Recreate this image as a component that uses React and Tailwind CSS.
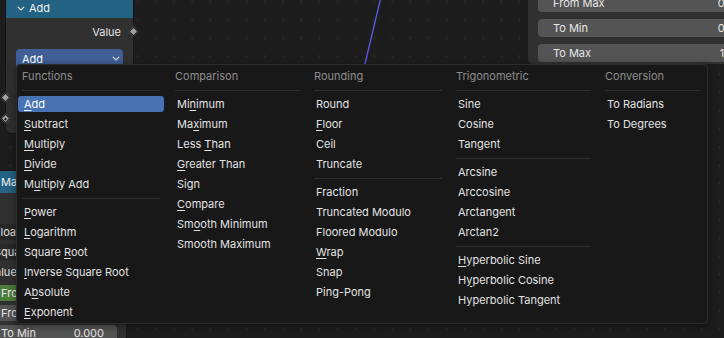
import React from "react";

const columns = [
  {
    title: "Functions",
    w: "w-[146px]",
    groups: [
      ["&Add", "&Subtract", "&Multiply", "&Divide", "M&ultiply Add"],
      ["&Power", "&Logarithm", "Square &Root", "&Inverse Square Root", "A&bsolute", "&Exponent"],
    ],
  },
  {
    title: "Comparison",
    w: "w-[133px] ml-[1px]",
    groups: [
      ["Mi&nimum", "Ma&ximum", "Less &Than", "&Greater Than", "Sign", "&Compare", "Sm&ooth Minimum", "Smooth Maximum"],
    ],
  },
  {
    title: "Rounding",
    w: "w-[136px]",
    groups: [
      ["Round", "&Floor", "Ceil", "Truncate"],
      ["Fraction", "Truncated Modulo", "Floored Modulo", "&Wrap", "Snap", "Ping-Pong"],
    ],
  },
  {
    title: "Trigonometric",
    w: "w-[143px]",
    groups: [
      ["Sine", "Cosine", "Tangent"],
      ["Arcsine", "Arccosine", "Arctangent", "Arctan2"],
      ["&Hyperbolic Sine", "H&yperbolic Cosine", "Hyperbolic Tangent"],
    ],
  },
  {
    title: "Conversion",
    w: "w-[103px]",
    groups: [["To Radians", "To Degrees"]],
  },
];

function Label({ text }) {
  const i = text.indexOf("&");
  if (i < 0) return <span>{text}</span>;
  return (
    <span>
      {text.slice(0, i)}
      <span className="underline decoration-1 underline-offset-[2px]">{text[i + 1]}</span>
      {text.slice(i + 2)}
    </span>
  );
}

function Sep() {
  return (
    <div className="h-[8px] flex items-center px-[4px]">
      <div className="h-px w-full bg-[#2e2e2e]" />
    </div>
  );
}

function Column({ col }) {
  return (
    <div className={`${col.w} flex flex-col`}>
      <div className="h-[20px] flex items-center px-[4px] text-[#8d8d8d]">{col.title}</div>
      {col.groups.map((g, gi) => (
        <React.Fragment key={gi}>
          <Sep />
          {g.map((it) => {
            const active = it === "&Add";
            return (
              <div key={it} className="h-[20px] py-[2px]">
                <div
                  className={`h-[16px] rounded-[3px] px-[6px] flex items-center ${
                    active ? "bg-[#4772b3] text-white" : "text-[#e2e2e2]"
                  }`}
                >
                  <Label text={it} />
                </div>
              </div>
            );
          })}
        </React.Fragment>
      ))}
    </div>
  );
}

function Socket({ hollow }) {
  return (
    <div className="w-[7px] h-[7px] rotate-45 bg-[#a3a3a3] border border-[#1c1c1c] flex items-center justify-center">
      {hollow && <div className="w-[2px] h-[2px] bg-[#1c1c1c]" />}
    </div>
  );
}

function Chevron({ className }) {
  return (
    <svg width="8" height="5" viewBox="0 0 8 5" className={className}>
      <path d="M0.8 0.8 L4 4 L7.2 0.8" fill="none" stroke="currentColor" strokeWidth="1.1" />
    </svg>
  );
}

export default function App() {
  return (
    <div className="relative w-[724px] h-[338px] overflow-hidden bg-[#1d1d1d] bg-[radial-gradient(circle,#2a2a2a_0.9px,transparent_1.3px)] bg-[length:18.2px_18.2px] bg-[position:1.2px_-7.4px] font-['Inter','Noto_Sans',sans-serif] text-[11px] leading-none">
      {/* node link */}
      <svg className="absolute inset-0" width="724" height="338">
        <line x1="380.5" y1="-1" x2="363.5" y2="70" stroke="#5c5ce6" strokeWidth="1.3" />
      </svg>

      {/* Math node: Add */}
      <div className="absolute left-[6px] top-[-3px] w-[127px] h-[136px] rounded-[5px] bg-[#303030] shadow-[0_0_0_1px_#161616]">
        <div className="h-[21px] rounded-t-[5px] bg-[#246283] flex items-end pb-[4px] text-[#f0f0f0]">
          <Chevron className="ml-[11px] mr-[4px] mb-[3px] text-[#e8e8e8]" />
          <span>Add</span>
        </div>
        <div className="h-[20px] mt-[4px] flex items-center justify-end pr-[12px] text-[#e2e2e2]">Value</div>
        <div className="mt-[7px] mx-[10px] h-[20px] rounded-[4px] bg-[#3f5f96] flex items-center justify-between pl-[6px] pr-[3px] text-white">
          <span>Add</span>
          <Chevron className="text-[#dcdcdc] mb-[1px]" />
        </div>
        <div className="absolute right-[-4px] top-[31px]">
          <Socket />
        </div>
        <div className="absolute left-[-4px] top-[97px]">
          <Socket />
        </div>
        <div className="absolute left-[-4px] top-[118px]">
          <Socket hollow />
        </div>
      </div>

      {/* Map Range node (left, mostly hidden) */}
      <div className="absolute left-[-22px] top-[171px] w-[148px] h-[190px] rounded-[5px] bg-[#303030] shadow-[0_0_0_1px_#161616]">
        <div className="h-[22px] rounded-t-[5px] bg-[#246283] flex items-center pl-[23px] text-[#f0f0f0]">Map Range</div>
        <div className="h-[29px] flex items-center justify-end pr-[12px] text-[#e2e2e2]">Result</div>
        <div className="h-[20px] py-[2px] px-[8px]">
          <div className="h-full rounded-[4px] bg-[#282828] flex items-center pl-[8px] text-[#e2e2e2]">Float</div>
        </div>
        <div className="h-[20px] py-[2px] px-[8px]">
          <div className="h-full rounded-[4px] bg-[#282828] flex items-center pl-[8px] text-[#e2e2e2]">Square</div>
        </div>
        <div className="h-[21px] flex items-center pl-[10px] text-[#e2e2e2]">Value</div>
        <div className="h-[20px] py-[2px] px-[8px]">
          <div className="h-full rounded-[4px] bg-[#4d7d3a] flex items-center pl-[15px] text-[#f0f0f0]">From Min</div>
        </div>
        <div className="h-[20px] py-[2px] px-[8px]">
          <div className="h-full rounded-[4px] bg-[#545454] flex items-center pl-[15px] text-[#e6e6e6]">From Max</div>
        </div>
        <div className="h-[20px] py-[2px] pl-[8px] pr-[9px]">
          <div className="h-full rounded-[4px] bg-[#545454] flex items-center justify-between pl-[15px] pr-[13px] text-[#e6e6e6]">
            <span>To Min</span>
            <span>0.000</span>
          </div>
        </div>
      </div>

      {/* Map Range node (top right) */}
      <div className="absolute left-[528px] top-[-20px] w-[240px] h-[84px] rounded-[5px] bg-[#303030] pt-[14px] pl-[10px] flex flex-col gap-[7px]">
        {[
          ["From Max", "0.000"],
          ["To Min", "0.000"],
          ["To Max", "1.000"],
        ].map(([l, v]) => (
          <div key={l} className="h-[18px] w-[220px] rounded-[4px] bg-[#545454] flex items-center pl-[15px] text-[#e6e6e6]">
            <span>{l}</span>
            <span className="ml-auto mr-[10px]">{v}</span>
          </div>
        ))}
      </div>

      {/* Dropdown menu */}
      <div className="absolute left-[16px] top-[64px] w-[692px] h-[260px] rounded-[4px] bg-[#181818] border border-[#2c2c2c] shadow-[0_2px_8px_rgba(0,0,0,0.45)] flex pl-[1px] pt-[1px] gap-[6px]">
        {columns.map((c) => (
          <Column key={c.title} col={c} />
        ))}
      </div>
    </div>
  );
}
